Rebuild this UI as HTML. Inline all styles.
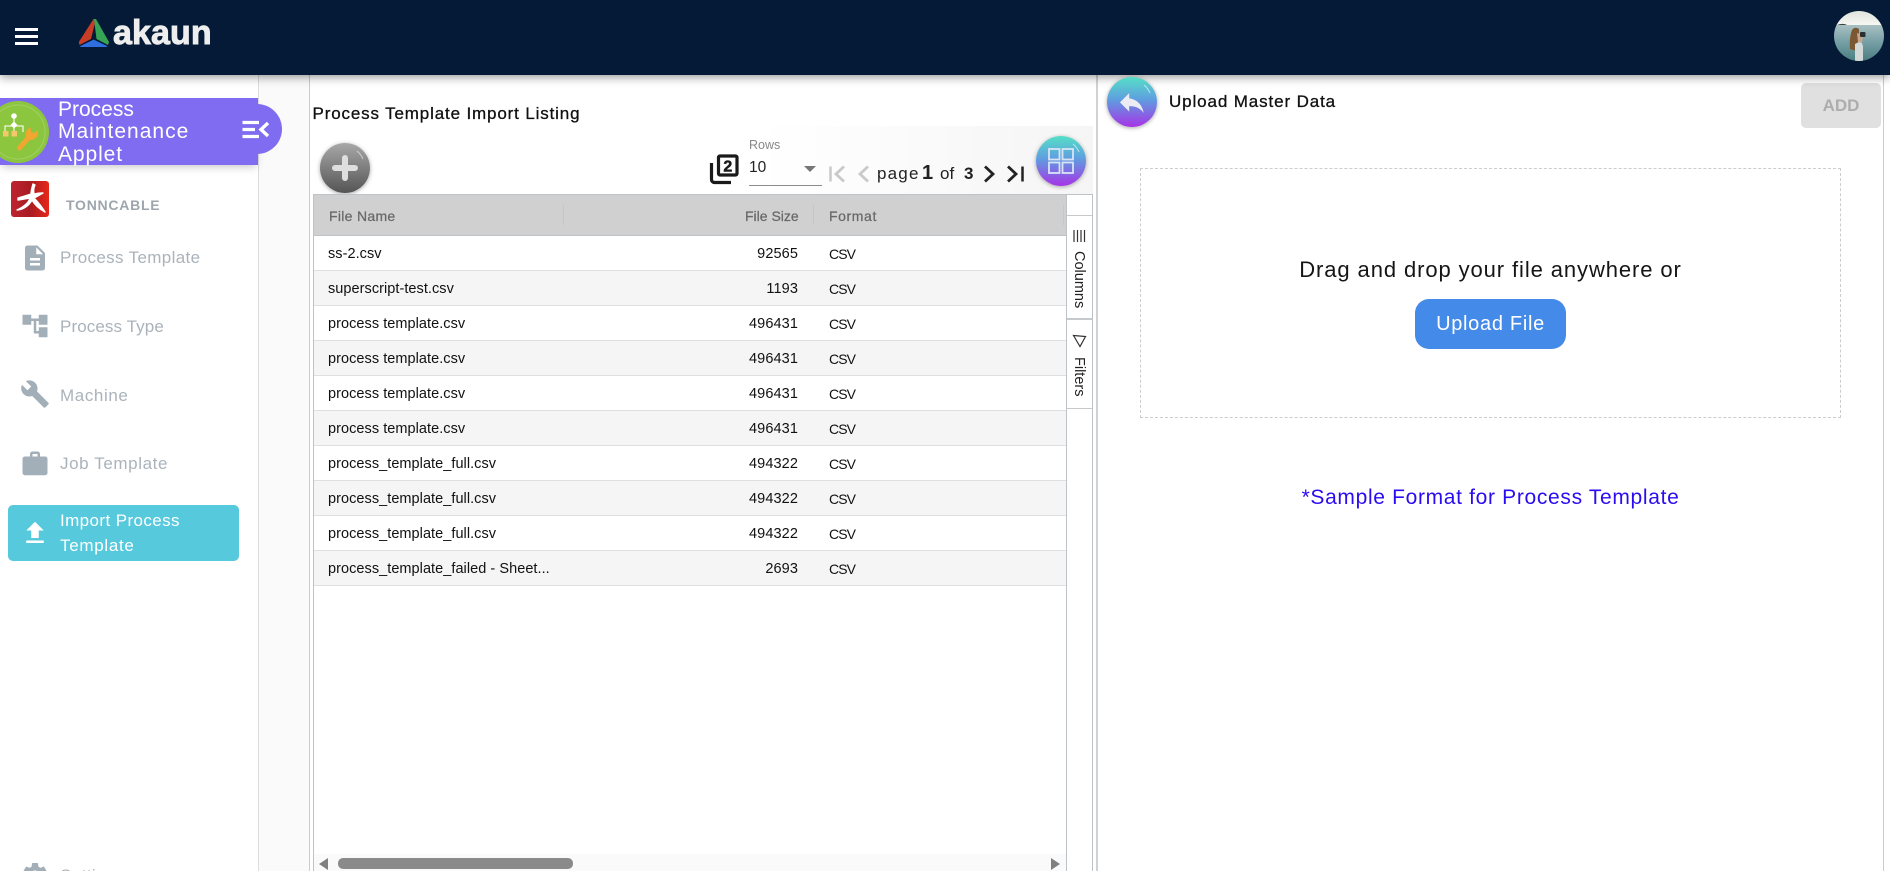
<!DOCTYPE html>
<html lang="en"><head><meta charset="utf-8"><title>Process Template Import</title>
<style>
html,body{margin:0;padding:0;width:1890px;height:871px;overflow:hidden;background:#fff;font-family:"Liberation Sans",sans-serif}
#p{position:relative;width:1890px;height:871px;overflow:hidden;background:#fff}
#p div,#p span.a,#p svg{position:absolute}
.t{white-space:nowrap;font-size:17px;line-height:24px;height:24px}
.nav{color:#aab3bb}
.m{-webkit-text-stroke:.3px currentColor}
.row{left:314px;width:753px;height:34px;border-bottom:1px solid #dde0e3;background:#fff}
.row.o{background:#f5f5f5}
.row div{top:0;line-height:37px;font-size:14.5px;color:#111;white-space:nowrap}
.n{left:14px;letter-spacing:.05px}.s{right:269px;letter-spacing:.1px}.c{left:515px;font-size:14px!important;letter-spacing:-.9px;line-height:36px!important}
.h{font-size:14px;line-height:42px;top:195px;color:#686868;white-space:nowrap;-webkit-text-stroke:.25px #686868}
.vl{width:1px}
.v{writing-mode:vertical-rl;font-size:14.5px;color:#222;white-space:nowrap;line-height:14px}
.cta{border-radius:50%;box-shadow:0 1px 4px rgba(0,0,0,.35)}
</style></head><body><div id="p">

<!-- backgrounds -->
<div style="left:259px;top:75px;width:50px;height:796px;background:#fafafa"></div>
<div style="left:258px;top:75px;width:1px;height:796px;background:#ddd"></div>
<div style="left:309px;top:75px;width:1px;height:796px;background:#ccc"></div>
<div style="left:1096px;top:75px;width:2px;height:796px;background:#d2d2d2"></div>
<div style="left:1883px;top:75px;width:1px;height:796px;background:#ccc"></div>
<div style="left:760px;top:126px;width:333px;height:68px;background:linear-gradient(90deg,#fff,#f5f5f5)"></div>

<!-- header -->
<div style="left:0;top:0;width:1890px;height:75px;background:#041a36;box-shadow:0 2px 9px rgba(0,0,0,.42);z-index:5">
  <div style="left:15px;top:27.5px;width:23px;height:3px;background:#fff"></div>
  <div style="left:15px;top:34.5px;width:23px;height:3px;background:#fff"></div>
  <div style="left:15px;top:41.5px;width:23px;height:3px;background:#fff"></div>
  <svg style="left:78px;top:18px" width="32" height="30" viewBox="0 0 32 30">
    <path d="M15.5 1 L18 1 L13 21 L1.5 27 L.8 24 Z" fill="#c93c26"/>
    <path d="M16 1 L18 1 L31 24 L30 27 L18.5 21 Z" fill="#36a455"/>
    <path d="M15.7 21.6 L29 28 Q29.5 29 28 29 L3 29 Q1.8 29 2.4 28 Z" fill="#2f6fe0"/>
  </svg>
  <div style="left:113px;top:13px;font:bold 34px/40px 'Liberation Sans',sans-serif;letter-spacing:.1px;color:#eeeeee;white-space:nowrap;-webkit-text-stroke:.9px #eeeeee">akaun</div>
  <svg style="left:1834px;top:11px" width="50" height="50" viewBox="0 0 50 50">
    <defs><clipPath id="cp"><circle cx="25" cy="25" r="25"/></clipPath>
    <linearGradient id="sea" x1="0" y1="0" x2="0" y2="1"><stop offset="0" stop-color="#a9c0c3"/><stop offset=".5" stop-color="#739ea4"/><stop offset="1" stop-color="#4a7d80"/></linearGradient>
    <linearGradient id="sky" x1="0" y1="0" x2="0" y2="1"><stop offset="0" stop-color="#dfe3dd"/><stop offset="1" stop-color="#f6f6f2"/></linearGradient></defs>
    <g clip-path="url(#cp)">
      <rect width="50" height="14" fill="url(#sky)"/>
      <rect y="14" width="50" height="36" fill="url(#sea)"/>
      <path d="M3 14 Q8 12 12 13.500 L13 14Z" fill="#39443f"/>
      <path d="M16 38 Q15 27 18 19 Q21 15 25 18 L25 25 L22 40Z" fill="#7a5832"/>
      <path d="M21 33 L27 30 L29 35 L29 50 L21 50 Z" fill="#d2d9d7"/>
      <path d="M23 22 L29 24 L28 32 L24 31Z" fill="#c9a58e"/>
      <rect x="26" y="21" width="5.500" height="5" rx="1" fill="#2b2f31"/>
    </g>
  </svg>
</div>

<!-- sidebar applet header -->
<div style="left:0;top:98px;width:258px;height:67px;background:#7f6cf0;box-shadow:0 4px 8px -2px rgba(0,0,0,.22);z-index:2"></div>
<div style="left:232px;top:104px;width:50px;height:50px;border-radius:25px;background:#7f6cf0;z-index:2"></div>
<svg style="left:0;top:98px;z-index:3" width="60" height="67" viewBox="0 0 60 67">
  <circle cx="18" cy="34" r="31" fill="#8cc63f"/>
  <circle cx="18" cy="34" r="27" fill="none" stroke="#a2cf63" stroke-width="1"/>
  <path d="M14 19V35M5 34V28H23V34" fill="none" stroke="#eef5dc" stroke-width="1.3"/>
  <circle cx="14" cy="18" r="2.8" fill="#fff"/>
  <path d="M14 23.5l3.5 3.5-3.5 3.5-3.5-3.5z" fill="#fff"/>
  <rect x="3" y="33" width="5.5" height="5.5" fill="#f6c66b"/>
  <rect x="11.5" y="33" width="5.5" height="5.5" fill="#f6c66b"/>
  <path d="M19.500 50 L30 38" stroke="#f0a62f" stroke-width="5" stroke-linecap="round"/>
  <path d="M27 41a7.500 7.500 0 0 1 1-10l2.500-2 .5 5 3.500 1 3-3a7.500 7.500 0 0 1-3 9 7.500 7.500 0 0 1-7.500 0z" fill="#f0a62f"/>
</svg>
<div class="t" style="left:58px;top:98px;color:#fff;font-size:21px;z-index:3">Process</div>
<div class="t" style="left:58px;top:119.500px;color:#fff;font-size:21px;letter-spacing:1px;z-index:3">Maintenance</div>
<div class="t" style="left:58px;top:143px;color:#fff;font-size:21px;letter-spacing:.9px;z-index:3">Applet</div>
<svg style="left:242px;top:120px;z-index:3" width="30" height="20" viewBox="0 0 30 20">
  <path d="M.5 2.500H17M.5 9.500H13M.5 16.500H17" stroke="#fff" stroke-width="3.200" fill="none"/>
  <path d="M26 3L19 9.500l7 6.500" stroke="#fff" stroke-width="3.400" fill="none"/>
</svg>

<!-- company -->
<svg style="left:11px;top:181px" width="38" height="36" viewBox="0 0 38 36">
  <defs><linearGradient id="rd" x1="0" x2="1"><stop offset="0" stop-color="#bf2430"/><stop offset=".5" stop-color="#a81c22"/><stop offset="1" stop-color="#e8261a"/></linearGradient></defs>
  <rect width="38" height="36" rx="3" fill="url(#rd)"/>
  <path d="M22 3 Q20 10 20 13 Q14 15 7 17 L7 19 Q13 18 19 17 Q17 24 6 29 Q16 28 21 19 Q25 26 34 31 Q29 23 23 17 Q27 15 32 12 Q27 12 23 13 Q22 8 24 4Z" fill="#fff" stroke="#fff" stroke-width="1.400" stroke-linejoin="round"/>
</svg>
<div class="t" style="left:66px;top:192.500px;font-size:14px;font-weight:bold;letter-spacing:.75px;color:#9ea6ad">TONNCABLE</div>

<!-- nav -->
<svg style="left:20px;top:242.500px" width="30" height="30" viewBox="0 0 24 24"><path fill="#a3afb8" d="M14 2H6c-1.100 0-1.990.9-1.990 2L4 20c0 1.100.89 2 1.990 2H18c1.100 0 2-.9 2-2V8l-6-6zm2 16H8v-2h8v2zm0-4H8v-2h8v2zm-3-5V3.500L18.500 9H13z"/></svg>
<div class="t nav" style="left:60px;top:246px;letter-spacing:.35px">Process Template</div>
<svg style="left:20px;top:311px" width="30" height="30" viewBox="0 0 24 24"><path fill="#a3afb8" d="M22 11V3h-7v3H9V3H2v8h7V8h2v10h4v3h7v-8h-7v3h-2V8h2v3z"/></svg>
<div class="t nav" style="left:60px;top:315px;letter-spacing:.1px">Process Type</div>
<svg style="left:20px;top:379px" width="30" height="30" viewBox="0 0 24 24"><path fill="#a3afb8" d="M22.700 19l-9.100-9.100c.9-2.300.4-5-1.500-6.900-2-2-5-2.400-7.400-1.300L9 6 6 9 1.600 4.700C.4 7.100.9 10.100 2.900 12.100c1.900 1.900 4.600 2.400 6.900 1.500l9.100 9.100c.4.4 1 .4 1.400 0l2.300-2.300c.5-.4.5-1.100.1-1.400z"/></svg>
<div class="t nav" style="left:60px;top:384px;letter-spacing:.6px">Machine</div>
<svg style="left:20px;top:449px" width="30" height="30" viewBox="0 0 24 24"><path fill="#a3afb8" d="M20 6h-4V4c0-1.110-.89-2-2-2h-4c-1.110 0-2 .89-2 2v2H4c-1.110 0-1.990.89-1.990 2L2 19c0 1.110.89 2 2 2h16c1.110 0 2-.89 2-2V8c0-1.110-.89-2-2-2zm-6 0h-4V4h4v2z"/></svg>
<div class="t nav" style="left:60px;top:452px;letter-spacing:.6px">Job Template</div>
<div style="left:8px;top:505px;width:231px;height:56px;background:#57c9dc;border-radius:5px"></div>
<svg style="left:20px;top:517.500px" width="30" height="30" viewBox="0 0 24 24"><path fill="#fff" d="M9 16h6v-6h4l-7-7-7 7h4zm-4 2h14v2H5z"/></svg>
<div class="t" style="left:60px;top:509px;color:#fff;letter-spacing:.4px">Import Process</div>
<div class="t" style="left:60px;top:534px;color:#fff;letter-spacing:.7px">Template</div>
<svg style="left:20px;top:860px" width="30" height="30" viewBox="0 0 24 24"><path fill="#a3afb8" d="M19.140 12.940c.04-.3.06-.61.06-.94 0-.32-.02-.64-.07-.94l2.030-1.580a.49.49 0 0 0 .12-.61l-1.920-3.320a.488.488 0 0 0-.59-.22l-2.390.96c-.5-.38-1.030-.7-1.620-.94l-.36-2.540a.484.484 0 0 0-.48-.41h-3.840c-.24 0-.43.17-.47.41l-.36 2.540c-.59.24-1.130.57-1.620.94l-2.390-.96c-.22-.08-.47 0-.59.22L2.740 8.870c-.12.21-.08.47.12.61l2.030 1.580c-.05.3-.09.63-.09.94s.02.64.07.94l-2.030 1.580a.49.49 0 0 0-.12.61l1.920 3.320c.12.22.37.29.59.22l2.390-.96c.5.38 1.030.7 1.620.94l.36 2.540c.05.24.24.41.48.41h3.840c.24 0 .44-.17.47-.41l.36-2.540c.59-.24 1.130-.56 1.620-.94l2.390.96c.22.08.47 0 .59-.22l1.920-3.320c.12-.22.07-.47-.12-.61l-2.010-1.580zM12 15.600c-1.980 0-3.600-1.620-3.600-3.600s1.620-3.600 3.600-3.600 3.600 1.620 3.600 3.600-1.620 3.600-3.600 3.600z"/></svg>
<div class="t nav" style="left:60px;top:864px;letter-spacing:.4px">Settings</div>

<!-- listing panel -->
<div class="t m" style="left:312.500px;top:102px;color:#111;letter-spacing:.85px">Process Template Import Listing</div>
<div class="cta" style="left:320px;top:143px;width:50px;height:50px;background:linear-gradient(#a8a8a8,#555)"></div>
<svg style="left:320px;top:143px" width="50" height="50" viewBox="0 0 50 50">
  <path d="M25 15V35M15 25H35" stroke="#dedede" stroke-width="6" stroke-linecap="round"/>
  <path d="M37 8a22 22 0 0 1 6 8" fill="none" stroke="#fff" stroke-opacity=".55" stroke-width="1"/>
</svg>

<!-- rows selector -->
<svg style="left:709px;top:154px" width="30" height="31" viewBox="0 0 30 31">
  <rect x="9.500" y="2" width="18.500" height="19" rx="1.500" fill="none" stroke="#1a1a1a" stroke-width="3.200"/>
  <path d="M2.500 9V25.500a3 3 0 0 0 3 3H22" fill="none" stroke="#1a1a1a" stroke-width="3.200"/>
  <text x="18.800" y="17.500" text-anchor="middle" font-family="Liberation Sans,sans-serif" font-weight="bold" font-size="16" fill="#1a1a1a" stroke="#1a1a1a" stroke-width=".5">2</text>
</svg>
<div style="left:749px;top:138px;font-size:12.500px;line-height:15px;color:#888">Rows</div>
<div style="left:749px;top:159px;font-size:15.500px;line-height:18px;color:#222">10</div>
<div style="left:749px;top:185px;width:73px;height:1px;background:#8c8c8c"></div>
<div style="left:804px;top:166px;width:0;height:0;border-left:6px solid transparent;border-right:6px solid transparent;border-top:6px solid #777"></div>
<svg style="left:826px;top:162px" width="202" height="24" viewBox="826 162 202 24">
  <path d="M830.500 166.500V181.500" stroke="#c9c9c9" stroke-width="2.500" fill="none"/>
  <path d="M844 166.500L836 174l8 7.500M868 166.500L860 174l8 7.500" stroke="#c9c9c9" stroke-width="2.800" fill="none"/>
  <path d="M985 166.500L993 174l-8 7.500M1008 166.500L1016 174l-8 7.500" stroke="#222" stroke-width="2.800" fill="none"/>
  <path d="M1022.500 166.500V181.500" stroke="#222" stroke-width="2.500" fill="none"/>
</svg>
<div class="t" style="left:877px;top:162px;letter-spacing:1.2px;color:#222">page</div>
<div class="t" style="left:922px;top:161px;font-size:20px;font-weight:bold;color:#222">1</div>
<div class="t" style="left:940px;top:162px;color:#222">of</div>
<div class="t" style="left:964px;top:162px;font-weight:bold;color:#222">3</div>
<div class="cta" style="left:1036px;top:136px;width:50px;height:50px;background:linear-gradient(#55dfc6,#5f9ee0 45%,#a733e6)"></div>
<svg style="left:1036px;top:136px" width="50" height="50" viewBox="0 0 50 50">
  <g fill="none" stroke="#d8e4f6" stroke-width="1.800"><rect x="13" y="13" width="10.500" height="10.500"/><rect x="26.500" y="13" width="10.500" height="10.500"/><rect x="13" y="26.500" width="10.500" height="10.500"/><rect x="26.500" y="26.500" width="10.500" height="10.500"/></g>
  <path d="M37 8a22 22 0 0 1 6 8" fill="none" stroke="#fff" stroke-opacity=".6" stroke-width="1"/>
</svg>

<!-- grid -->
<div style="left:313px;top:194px;height:677px;border-left:1px solid #bdc3c7;border-right:1px solid #bdc3c7;border-top:1px solid #bdc3c7;box-sizing:border-box;width:780px"></div>
<div style="left:314px;top:195px;width:753px;height:40px;background:#d0d0d0;border-bottom:1px solid #bdc3c7"></div>
<div class="vl" style="left:563px;top:205px;height:20px;background:#c3c7ca"></div>
<div class="vl" style="left:813px;top:205px;height:20px;background:#c3c7ca"></div>
<div class="vl" style="left:1063px;top:205px;height:20px;background:#c3c7ca"></div>
<div class="h" style="left:329px;letter-spacing:.3px">File Name</div>
<div class="h" style="left:745px">File Size</div>
<div class="h" style="left:829px;letter-spacing:.6px">Format</div>

<div class="row" style="top:236px"><div class="n">ss-2.csv</div><div class="s">92565</div><div class="c">CSV</div></div>
<div class="row o" style="top:271px"><div class="n">superscript-test.csv</div><div class="s">1193</div><div class="c">CSV</div></div>
<div class="row" style="top:306px"><div class="n">process template.csv</div><div class="s">496431</div><div class="c">CSV</div></div>
<div class="row o" style="top:341px"><div class="n">process template.csv</div><div class="s">496431</div><div class="c">CSV</div></div>
<div class="row" style="top:376px"><div class="n">process template.csv</div><div class="s">496431</div><div class="c">CSV</div></div>
<div class="row o" style="top:411px"><div class="n">process template.csv</div><div class="s">496431</div><div class="c">CSV</div></div>
<div class="row" style="top:446px"><div class="n">process_template_full.csv</div><div class="s">494322</div><div class="c">CSV</div></div>
<div class="row o" style="top:481px"><div class="n">process_template_full.csv</div><div class="s">494322</div><div class="c">CSV</div></div>
<div class="row" style="top:516px"><div class="n">process_template_full.csv</div><div class="s">494322</div><div class="c">CSV</div></div>
<div class="row o" style="top:551px"><div class="n">process_template_failed - Sheet...</div><div class="s">2693</div><div class="c">CSV</div></div>

<!-- side tool panel -->
<div style="left:1066px;top:195px;width:1px;height:676px;background:#bdc3c7"></div>
<div style="left:1067px;top:215px;width:25px;height:1px;background:#c6cacd"></div>
<div style="left:1067px;top:318px;width:25px;height:2px;background:#c6cacd"></div>
<div style="left:1067px;top:408px;width:25px;height:1px;background:#c6cacd"></div>
<svg style="left:1072px;top:229px" width="15" height="14" viewBox="0 0 15 14"><path d="M2 1V13M5.500 1V13M9 1V13M12.500 1V13" stroke="#333" stroke-width="1.200"/></svg>
<div class="v" style="left:1072px;top:251px">Columns</div>
<svg style="left:1072px;top:334px" width="15" height="14" viewBox="0 0 15 14"><path d="M1.500 1.500L13.500 2.500 8 12.500Z" fill="none" stroke="#333" stroke-width="1.200"/></svg>
<div class="v" style="left:1072px;top:357px">Filters</div>

<!-- grid scrollbar -->
<div style="left:314px;top:854px;width:752px;height:17px;background:#fafafa"></div>
<div style="left:337.500px;top:858px;width:235.500px;height:11px;background:#8a8a8a;border-radius:5px"></div>
<div style="left:319px;top:858px;width:0;height:0;border-top:6px solid transparent;border-bottom:6px solid transparent;border-right:9px solid #808080"></div>
<div style="left:1051px;top:858px;width:0;height:0;border-top:6px solid transparent;border-bottom:6px solid transparent;border-left:9px solid #808080"></div>

<!-- right panel -->
<div class="cta" style="left:1107px;top:77px;width:50px;height:50px;background:linear-gradient(#55dfc6,#5f9ee0 45%,#a733e6);z-index:6"></div>
<svg style="left:1107px;top:77px;z-index:6" width="50" height="50" viewBox="0 0 50 50">
  <path transform="translate(9 9.500) scale(1.320)" fill="#ececf4" d="M10 9V5l-7 7 7 7v-4.100c5 0 8.500 1.600 11 5.100-1-5-4-10-11-11z"/>
  <path d="M37 8a22 22 0 0 1 6 8" fill="none" stroke="#fff" stroke-opacity=".6" stroke-width="1"/>
</svg>
<div class="t m" style="left:1169px;top:89.500px;color:#111;letter-spacing:.88px">Upload Master Data</div>
<div style="left:1801px;top:83px;width:80px;height:45px;background:#e0e0e0;border-radius:5px;text-align:center;font-weight:bold;font-size:17px;line-height:45px;color:#adadad">ADD</div>

<div style="left:1140px;top:168px;width:701px;height:250px;box-sizing:border-box;border:1px dashed #ccc"></div>
<div style="left:1140px;top:256px;width:701px;text-align:center;font-size:22px;line-height:28px;letter-spacing:.9px;color:#151515;white-space:nowrap">Drag and drop your file anywhere or</div>
<div style="left:1415px;top:299px;width:151px;height:50px;border-radius:14px;background:#448ae8;color:#fff;font-size:20px;line-height:50px;text-align:center;letter-spacing:.7px">Upload File</div>
<div style="left:1140px;top:484px;width:701px;text-align:center;font-size:21px;line-height:28px;letter-spacing:.67px;color:#2a0cf0;white-space:nowrap">*Sample Format for Process Template</div>

</div></body></html>
